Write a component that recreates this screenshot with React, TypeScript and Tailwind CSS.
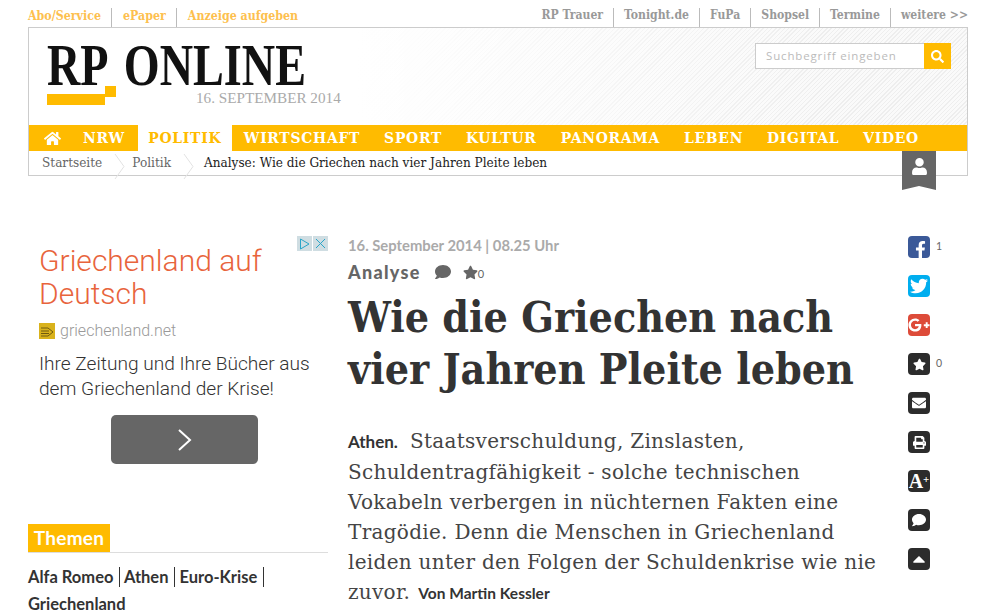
import React from 'react';
import {
    FaHome, FaSearch, FaUser, FaComment, FaStar, FaFacebookF, FaTwitter, FaGooglePlusG,
    FaEnvelope, FaPrint, FaCaretUp,
} from 'react-icons/fa';

const serif = "[font-family:'DejaVu_Serif_Condensed','DejaVu_Serif',serif]";

const leftLinks = ['Abo/Service', 'ePaper', 'Anzeige aufgeben'];
const rightLinks = ['RP Trauer', 'Tonight.de', 'FuPa', 'Shopsel', 'Termine', 'weitere >>'];
const navItems = ['WIRTSCHAFT', 'SPORT', 'KULTUR', 'PANORAMA', 'LEBEN', 'DIGITAL', 'VIDEO'];

const shareButtons = [
    { icon: <FaFacebookF className="text-[17px] mt-[4px] ml-[3px]" />, bg: 'bg-[#3b5998]', count: '1' },
    { icon: <FaTwitter className="text-[18px]" />, bg: 'bg-[#00aeef]' },
    { icon: <FaGooglePlusG className="text-[24px]" />, bg: 'bg-[#dd4b39]' },
    { icon: <FaStar className="text-[13px]" />, bg: 'bg-[#2c2c2c]', count: '0' },
    { icon: <FaEnvelope className="text-[14px]" />, bg: 'bg-[#2c2c2c]' },
    { icon: <FaPrint className="text-[13px]" />, bg: 'bg-[#2c2c2c]' },
    { icon: <span className="font-['Liberation_Serif'] text-[20px] font-bold leading-none">A<sup className="text-[11px]">+</sup></span>, bg: 'bg-[#2c2c2c]' },
    { icon: <FaComment className="text-[14px]" />, bg: 'bg-[#2c2c2c]' },
    { icon: <FaCaretUp className="text-[20px]" />, bg: 'bg-[#2c2c2c]' },
];

const Crumb = ({ label }: { label: string }) => (
    <div className="relative flex items-center pr-[30px] text-[#666]">
        {label}
        <svg className="absolute right-[6px] top-0" width="12" height="25" viewBox="0 0 12 25" fill="none">
            <path d="M1 0 L10 12.5 L1 25" stroke="#e2e2e2" />
        </svg>
    </div>
);

const App = () => (
    <div className="h-screen w-full overflow-hidden bg-white pl-[28px] pr-[22px] font-['Lato',sans-serif]">
        <div className={`flex h-[27px] justify-between pt-[8px] text-[12.3px] font-bold ${serif}`}>
            <div className="flex text-[#fdc04e]">
                {leftLinks.map((link, i) => (
                    <span key={link} className={i > 0 ? 'ml-[10px] border-l border-[#bbb] pl-[11px] leading-[15px]' : 'leading-[15px]'}>{link}</span>
                ))}
            </div>
            <div className="flex text-[12.1px] text-[#999]">
                {rightLinks.map((link, i) => (
                    <span key={link} className={i > 0 ? 'ml-[10px] border-l border-[#bbb] pl-[10px] leading-[15px]' : 'leading-[15px]'}>{link}</span>
                ))}
            </div>
        </div>

        <div className="relative h-[149px] border border-[#ccc]">
            <div className="flex h-[97px] justify-between bg-[linear-gradient(to_right,#fff,#fff_35%,transparent_85%),repeating-linear-gradient(135deg,#eee_0_1px,#fafafa_1px_3px)] pl-[18px] pr-[16px]">
                <div className="relative w-[320px]">
                    <div className="absolute left-0 top-[14px] origin-left scale-x-[.77] whitespace-nowrap font-['Liberation_Serif'] text-[60px] font-bold leading-[46px] text-[#111] [word-spacing:8px]">
                        RP ONLINE
                    </div>
                    <svg className="absolute left-0 top-[58px]" width="69" height="19" viewBox="0 0 69 19">
                        <path d="M0 8 H58 V0 H69 V11 H58 V19 H0 Z" fill="#ffbb00" />
                    </svg>
                    <div className="absolute left-[149px] top-[60px] whitespace-nowrap font-['Liberation_Serif'] text-[15.2px] leading-[20px] text-[#aaa]">
                        16. SEPTEMBER 2014
                    </div>
                </div>
                <div className="mt-[15px] flex h-[26px] w-[196px]">
                    <div className="flex flex-1 items-center border border-r-0 border-[#ccc] bg-white pl-[10px] font-['Open_Sans'] text-[11.5px] tracking-[.85px] text-[#bbb]">
                        Suchbegriff eingeben
                    </div>
                    <div className="flex w-[27px] items-center justify-center bg-[#ffbb00] text-white">
                        <FaSearch className="text-[13px]" />
                    </div>
                </div>
            </div>
            <div className={`flex h-[26px] items-center bg-[#ffbb00] pl-[15px] text-[15.5px] font-bold tracking-[.7px] text-white ${serif}`}>
                <FaHome className="mr-[22px] text-[17px]" />
                <span>NRW</span>
                <span className="ml-[13px] mr-[12px] flex h-full w-[94px] items-center justify-center bg-white text-[#ffbb00]">POLITIK</span>
                <div className="flex gap-[24px]">
                    {navItems.map((item) => (
                        <span key={item}>{item}</span>
                    ))}
                </div>
            </div>
            <div className="flex h-[25px] items-center pl-[13px] font-['DejaVu_Serif',serif] text-[12.1px]">
                <Crumb label="Startseite" />
                <Crumb label="Politik" />
                <span className="ml-[3px] text-[#222]">Analyse: Wie die Griechen nach vier Jahren Pleite leben</span>
            </div>
            <div className="absolute left-[873px] top-[123px] flex h-[39px] w-[34px] justify-center bg-[#666] pt-[7px] text-white [clip-path:polygon(0_0,100%_0,100%_100%,50%_90%,0_100%)]">
                <FaUser className="text-[17px]" />
            </div>
        </div>

        <div className="mt-[60px] flex">
            <div className="w-[300px] shrink-0">
                <div className="relative h-[250px] pl-[11px] pt-[8px] font-['Roboto']">
                    <div className="absolute right-0 top-0 flex gap-px">
                        <div className="flex h-[15px] w-[15px] items-center justify-center bg-[#cfdde2] text-[#2aa5c8]">
                            <svg width="11" height="12" viewBox="0 0 11 12" fill="none" stroke="currentColor"><path d="M1.5 1 L10 6 L1.5 11 Z" /></svg>
                        </div>
                        <div className="flex h-[15px] w-[15px] items-center justify-center bg-[#cfdde2] text-[#2aa5c8]">
                            <svg width="11" height="11" viewBox="0 0 11 11" fill="none" stroke="currentColor"><path d="M1 1 L10 10 M10 1 L1 10" /></svg>
                        </div>
                    </div>
                    <div className="text-[30px] font-light leading-[33px] text-[#e8643c]">Griechenland auf<br />Deutsch</div>
                    <div className="mt-[11px] flex h-[20px] items-center gap-[5px] text-[16px] font-light text-[#999]">
                        <svg width="16" height="16" viewBox="0 0 16 16">
                            <rect width="16" height="16" fill="#d9b21c" />
                            <path d="M2 5 L9 5 L14 9 L9 13 L2 13 M2 8 H10 M2 10.5 H10" stroke="#6f5a10" fill="none" />
                        </svg>
                        griechenland.net
                    </div>
                    <div className="mt-[10px] text-[19.1px] font-light leading-[25px] text-[#333]">Ihre Zeitung und Ihre Bücher aus<br />dem Griechenland der Krise!</div>
                    <div className="ml-[72px] mt-[14px] flex h-[49px] w-[147px] items-center justify-center rounded-[5px] bg-[#666]">
                        <svg width="16" height="24" viewBox="0 0 16 24" fill="none" stroke="white" strokeWidth="2"><path d="M2 2 L13 12 L2 22" /></svg>
                    </div>
                </div>
                <div className="mt-[38px] border-b border-[#ddd]">
                    <div className="flex h-[28px] w-[82px] items-center justify-center bg-[#ffbb00] text-[19px] font-bold tracking-[.3px] text-white">Themen</div>
                </div>
                <div className="mt-[11px] text-[16.5px] font-bold leading-[27px] text-[#333]">
                    <span className="border-r border-[#333] pr-[6px]">Alfa Romeo</span>{' '}
                    <span className="border-r border-[#333] pr-[6px]">Athen</span>{' '}
                    <span className="border-r border-[#333] pr-[6px]">Euro-Krise</span>
                    <br />
                    Griechenland
                </div>
            </div>

            <div className="ml-[20px] w-[530px] shrink-0">
                <div className="-mt-[1px] text-[14.8px] font-bold leading-[20px] text-[#aaa]">16. September 2014 | 08.25 Uhr</div>
                <div className="mt-[7px] flex h-[20px] items-center text-[#666]">
                    <span className="text-[18px] font-black tracking-[1.3px]">Analyse</span>
                    <FaComment className="ml-[14px] text-[16px]" />
                    <FaStar className="ml-[12px] text-[15px]" />
                    <span className="mt-[4px] text-[11px]">0</span>
                </div>
                <h1 className={`mt-[10px] text-[42.5px] font-bold leading-[51.5px] text-[#333] ${serif}`}>
                    Wie die Griechen nach<br />vier Jahren Pleite leben
                </h1>
                <p className="mt-[31px] whitespace-nowrap font-['DejaVu_Serif',serif] text-[20px] leading-[30px] tracking-[.3px] text-[#444]">
                    <span className="mr-[12px] font-['Lato'] text-[17px] font-bold tracking-normal text-[#333]">Athen.</span>
                    Staatsverschuldung, Zinslasten,<br />
                    Schuldentragfähigkeit - solche technischen<br />
                    Vokabeln verbergen in nüchternen Fakten eine<br />
                    Tragödie. Denn die Menschen in Griechenland<br />
                    leiden unter den Folgen der Schuldenkrise wie nie<br />
                    zuvor.
                    <span className="ml-[8px] font-['Lato'] text-[15.5px] font-bold tracking-normal text-[#333]">Von Martin Kessler</span>
                </p>
            </div>

            <div className="ml-[30px] flex flex-col gap-[17px]">
                {shareButtons.map((button, i) => (
                    <div key={i} className="flex h-[22px] items-center">
                        <div className={`flex h-[22px] w-[22px] items-center justify-center overflow-hidden rounded-[4px] text-white ${button.bg}`}>
                            {button.icon}
                        </div>
                        {button.count && <span className="ml-[6px] text-[10.5px] text-[#666]">{button.count}</span>}
                    </div>
                ))}
            </div>
        </div>
    </div>
);

export default App;
